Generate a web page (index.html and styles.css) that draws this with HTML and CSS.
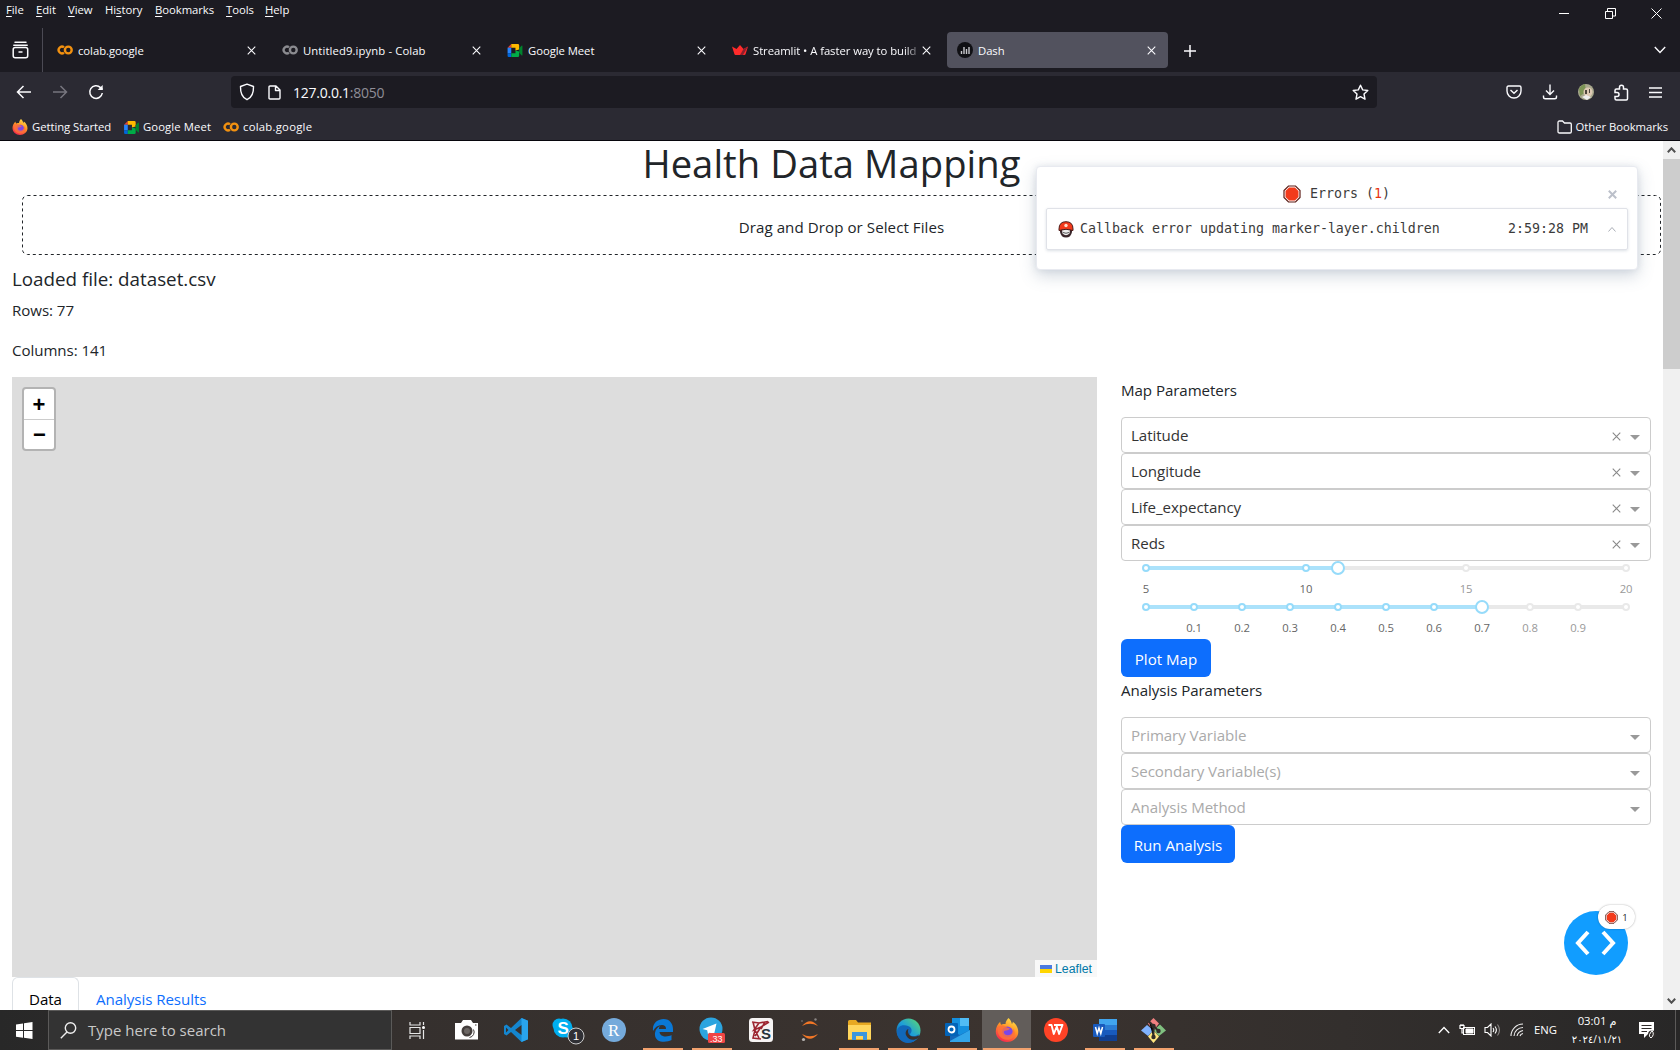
FILE: index.html
```html
<!DOCTYPE html>
<html lang="en">
<head>
<meta charset="utf-8">
<title>Dash</title>
<link rel="stylesheet" href="styles.css">
</head>
<body>
<svg class="defs" width="0" height="0">
  <defs>
    <linearGradient id="fx" x1=".8" y1="0" x2=".3" y2="1"><stop offset="0" stop-color="#ffe84a"/><stop offset=".45" stop-color="#ff9526"/><stop offset="1" stop-color="#f5264f"/></linearGradient>
    <linearGradient id="eg" x1="0" y1="1" x2="1" y2="0"><stop offset="0" stop-color="#0c59a4"/><stop offset=".5" stop-color="#1e9fd8"/><stop offset="1" stop-color="#5fdc6c"/></linearGradient>
    <symbol id="x" viewBox="0 0 10 10"><path d="M.8.8 9.2 9.2M9.2.8.8 9.2" fill="none" stroke="currentColor" stroke-width="1.2"/></symbol>
    <symbol id="colab" viewBox="0 0 16 10"><g fill="none" stroke-width="2.4"><circle cx="11.3" cy="5" r="3.4" stroke="currentColor"/><path d="M7 2.2A3.4 3.4 0 1 0 7 7.8" stroke="currentColor"/></g></symbol>
    <symbol id="meet" viewBox="0 0 16 14"><path d="M0 4 4 0v4z" fill="#ea4335"/><path d="M0 4h4v6H0z" fill="#2684fc"/><path d="M0 10h4v4H1.3Q0 14 0 12.700z" fill="#0066da"/><path d="M4 0h7q1.500 0 1.500 1.400V6L8.500 7V4H4z" fill="#ffba00"/><path d="M4 10h4.500V7l4 1v4.600q0 1.400-1.500 1.400H4z" fill="#00ac47"/><path d="M12.500 4.500 15 1.800q1-.6 1 .4v9.600q0 1-1 .4l-2.500-2.700z" fill="#00832d"/></symbol>
    <symbol id="firefox" viewBox="0 0 32 32"><path d="M18 0c3 3 4 5 4.500 8 1-1 1.200-2 1.200-3C28 8 31 13 31 18.500 31 26 24 32 16 32S1 26 1 18C1 12 4 8 7 5c0 2 .5 3 1.500 4C10 8 12 8 14 8c0-3 2-6 4-8z" fill="url(#fx)"/><circle cx="16.500" cy="18.500" r="7.200" fill="#7b46e8"/><path d="M4 12c4-3 8-2 11 0 2 1.500 4 1.500 5 2-2 3-5 2-7 3-3 2 0 6 4 6 5 0 8-4 7-9 5 6 2 14-6 15C8 30 2 22 4 12z" fill="#ff7139" opacity=".8"/></symbol>
    <symbol id="stop" viewBox="0 0 18 18"><path d="M5.500 1h7L17 5.500v7L12.500 17h-7L1 12.500v-7z" fill="#fff" stroke="#5c1d16" stroke-width="1.200"/><path d="M6.100 2.500h5.800l3.600 3.600v5.800l-3.600 3.600H6.100l-3.600-3.600V6.100z" fill="#f33a1b"/></symbol>
  </defs>
</svg>

<header class="browser">
  <div class="menubar">
    <nav class="menus">
      <span style="width:30px"><u>F</u>ile</span><span style="width:32px"><u>E</u>dit</span><span style="width:37px"><u>V</u>iew</span><span style="width:50px">Hi<u>s</u>tory</span><span style="width:71px"><u>B</u>ookmarks</span><span style="width:39px"><u>T</u>ools</span><span><u>H</u>elp</span>
    </nav>
    <div class="window-buttons">
      <svg width="11" height="11"><path d="M0 5.500h10" stroke="#fff"/></svg>
      <svg width="11" height="11"><path d="M.5 3.500h7v7h-7zM2.500 3V.5h8v7.500H8" fill="none" stroke="#fff"/></svg>
      <svg width="11" height="11"><path d="m.5.5 10 10m0-10-10 10" stroke="#fff"/></svg>
    </div>
  </div>

  <div class="tabstrip">
    <div class="recent"><svg width="17" height="18" fill="none" stroke="#fbfbfe" stroke-width="1.500"><path d="M3 1.200h11M1.800 4.200h13.400" stroke-linecap="round"/><rect x="1.200" y="6.500" width="14.500" height="10.300" rx="2"/><path d="M6.500 11h4"/></svg></div>
    <div class="tab"><svg class="fav colab" width="16" height="10"><use href="#colab"/></svg><span class="label">colab.google</span><svg class="close"><use href="#x"/></svg></div>
    <div class="tab"><svg class="fav colab grey" width="16" height="10"><use href="#colab"/></svg><span class="label wide">Untitled9.ipynb - Colab</span><svg class="close"><use href="#x"/></svg></div>
    <div class="tab"><svg class="fav" width="16" height="13"><use href="#meet"/></svg><span class="label">Google Meet</span><svg class="close"><use href="#x"/></svg></div>
    <div class="tab"><svg class="fav" width="16" height="10"><path d="M0 1.500 4.500 4 8 0l3.500 4L16 1.500 13.600 9q-.2 1-1.200 1H3.600q-1 0-1.200-1z" fill="#ff2b2b"/><path d="m11.500 4 4.500-2.500L11 10H8z" fill="#8d1f2c"/></svg><span class="label fade">Streamlit • A faster way to build</span><svg class="close"><use href="#x"/></svg></div>
    <div class="tab active"><svg class="fav" width="16" height="16"><circle cx="8" cy="8" r="8" fill="#101014"/><path d="M4.500 12V9M7 12V5M9.500 12V7M12 12V5" stroke="#c8c8cc" stroke-width="1.400"/></svg><span class="label">Dash</span><svg class="close"><use href="#x"/></svg></div>
    <svg class="newtab" width="12" height="12"><path d="M6 0v12M0 6h12" stroke="#fbfbfe" stroke-width="1.500"/></svg>
    <svg class="alltabs" width="12" height="8"><path d="m.8 1 5.200 5.400L11.200 1" fill="none" stroke="#fbfbfe" stroke-width="1.400"/></svg>
  </div>

  <div class="toolbar">
    <div class="nav-buttons">
      <svg width="16" height="14" fill="none" stroke="#fbfbfe" stroke-width="1.500"><path d="M7.500 1 1.500 7l6 6M1.500 7H15"/></svg>
      <svg width="16" height="14" fill="none" stroke="#77767f" stroke-width="1.500"><path d="m8.500 1 6 6-6 6M14.500 7H1"/></svg>
      <svg width="16" height="16" fill="none" stroke="#fbfbfe" stroke-width="1.500"><path d="M14.300 9A6.300 6.300 0 1 1 12.500 3.600L14.500 5.500"/><path d="M14.700 1v5H9.700z" fill="#fbfbfe" stroke="none"/></svg>
    </div>
    <div class="urlbar">
      <svg width="16" height="18" fill="none" stroke="#fbfbfe" stroke-width="1.400"><path d="M8 1.200 14.500 3.500c.2 6-1.500 11-6.500 13.200C3 14.500 1.300 9.500 1.500 3.500z" stroke-linejoin="round"/></svg>
      <svg width="13" height="15" fill="none" stroke="#fbfbfe" stroke-width="1.400"><path d="M1 2q0-1 1-1h6l4 4v8q0 1-1 1H2q-1 0-1-1zM7.500 1v4.500H12" stroke-linejoin="round"/></svg>
      <span class="url">127.0.0.1<span class="port">:8050</span></span>
      <svg class="star" width="17" height="17" fill="none" stroke="#fbfbfe" stroke-width="1.400"><path d="m8.500 1.200 2.200 4.700 5.100.6-3.800 3.500 1 5.200-4.500-2.600L4 15.200 5 10 1.200 6.500l5.100-.6z" stroke-linejoin="round"/></svg>
    </div>
    <div class="actions">
      <svg width="16" height="14" fill="none" stroke="#fbfbfe" stroke-width="1.400"><path d="M2.500 1h11q1.500 0 1.500 1.500V6a7 7 0 0 1-14 0V2.500Q1 1 2.500 1z"/><path d="M4.500 5 8 8.300 11.500 5"/></svg>
      <svg width="16" height="16" fill="none" stroke="#fbfbfe" stroke-width="1.400"><path d="M8 .5V10M4 6.500l4 4 4-4M1.500 11.500V13q0 1.800 1.800 1.800h9.400q1.800 0 1.800-1.800v-1.500"/></svg>
      <svg width="16" height="16"><circle cx="8" cy="8" r="8" fill="#a9a98e"/><path d="M1 5Q3 1 7 0l1 8-6 4z" fill="#7c9455"/><circle cx="10" cy="8" r="4.500" fill="#ddc9b4"/><path d="M7 6h2v4H7zM11 5h1v4h-1z" fill="#4d463d"/><path d="m4 13 4-2 5 2-4 3z" fill="#eee"/></svg>
      <svg width="15" height="17" fill="none" stroke="#fbfbfe" stroke-width="1.500"><path d="M1 6.500q0-1.500 1.500-1.500h3V3.200a2 2 0 0 1 4 0V5H12q1.500 0 1.500 1.500v8.300q0 1.200-1.200 1.200H2.500Q1 16 1 14.500v-2h2a2 2 0 0 0 0-4H1z"/></svg>
      <svg width="13" height="11"><path d="M0 1h13M0 5.500h13M0 10h13" stroke="#fbfbfe" stroke-width="1.400"/></svg>
    </div>
  </div>

  <div class="bookmarks">
    <svg width="16" height="16"><use href="#firefox"/></svg><span style="width:92px">Getting Started</span>
    <svg width="15" height="13"><use href="#meet"/></svg><span class="wide" style="width:80px">Google Meet</span>
    <svg class="colab" width="16" height="10"><use href="#colab"/></svg><span class="wider">colab.google</span>
    <div class="other"><svg width="15" height="14" fill="none" stroke="#fbfbfe" stroke-width="1.300"><path d="M1 2.500Q1 1 2.500 1h3l2 2H13q1.300 0 1.300 1.300V11.700Q14.300 13 13 13H2.500Q1 13 1 11.500z"/></svg><span>Other Bookmarks</span></div>
  </div>
</header>

<main class="viewport">
  <div class="page">
    <h1>Health Data Mapping</h1>
    <div class="upload"><svg class="outline" width="1639" height="60"><rect x=".5" y=".5" width="1638" height="59" rx="5" fill="none" stroke="#212529" stroke-dasharray="3 3"/></svg><span>Drag and Drop or Select Files</span></div>
    <h5>Loaded file: dataset.csv</h5>
    <p>Rows: 77</p>
    <p>Columns: 141</p>
    <div class="row">
      <div class="map">
        <div class="zoom"><span>+</span><span>−</span></div>
        <div class="attribution"><svg width="12" height="8"><path d="M0 0h12v4H0z" fill="#4c7be1"/><path d="M0 4h12v4H0z" fill="#ffd500"/></svg>Leaflet</div>
      </div>
      <section class="params">
        <p>Map Parameters</p>
        <div class="select"><span>Latitude</span><svg class="clear"><use href="#x"/></svg><i></i></div>
        <div class="select"><span>Longitude</span><svg class="clear"><use href="#x"/></svg><i></i></div>
        <div class="select"><span>Life_expectancy</span><svg class="clear"><use href="#x"/></svg><i></i></div>
        <div class="select"><span>Reds</span><svg class="clear"><use href="#x"/></svg><i></i></div>
        <div class="slider">
          <div class="track" style="width:40%"></div>
          <b class="on" style="left:0%"></b><b class="on" style="left:33.33%"></b><b style="left:66.67%"></b><b style="left:100%"></b>
          <div class="handle" style="left:40%"></div>
          <em class="on" style="left:0%">5</em><em class="on" style="left:33.33%">10</em><em style="left:66.67%">15</em><em style="left:100%">20</em>
        </div>
        <div class="slider">
          <div class="track" style="width:70%"></div>
          <b class="on" style="left:0%"></b><b class="on" style="left:10%"></b><b class="on" style="left:20%"></b><b class="on" style="left:30%"></b><b class="on" style="left:40%"></b><b class="on" style="left:50%"></b><b class="on" style="left:60%"></b><b style="left:80%"></b><b style="left:90%"></b><b style="left:100%"></b>
          <div class="handle" style="left:70%"></div>
          <em class="on" style="left:10%">0.1</em><em class="on" style="left:20%">0.2</em><em class="on" style="left:30%">0.3</em><em class="on" style="left:40%">0.4</em><em class="on" style="left:50%">0.5</em><em class="on" style="left:60%">0.6</em><em class="on" style="left:70%">0.7</em><em style="left:80%">0.8</em><em style="left:90%">0.9</em>
        </div>
        <button class="btn plot">Plot Map</button>
        <p>Analysis Parameters</p>
        <div class="select empty"><span>Primary Variable</span><i></i></div>
        <div class="select empty"><span>Secondary Variable(s)</span><i></i></div>
        <div class="select empty"><span>Analysis Method</span><i></i></div>
        <button class="btn run">Run Analysis</button>
      </section>
    </div>
    <div class="result-tabs"><span class="current">Data</span><span>Analysis Results</span></div>
  </div>
  <div class="scrollbar">
    <svg width="9" height="6"><path d="M.8 5.200 4.500 1.300 8.200 5.200" fill="none" stroke="#505050" stroke-width="2"/></svg>
    <div class="thumb"></div>
    <svg class="down" width="9" height="6"><path d="M.8.8 4.500 4.700 8.200.8" fill="none" stroke="#505050" stroke-width="2"/></svg>
  </div>

  <aside class="errors">
    <div class="errors-head"><svg width="18" height="18"><use href="#stop"/></svg><span>Errors (<strong>1</strong>)</span><svg class="dismiss" width="9" height="9"><path d="m.8.8 7.400 7.400m0-7.400L.8 8.200" stroke="#bcc0ca" stroke-width="2"/></svg></div>
    <div class="error-item">
      <svg width="16" height="17"><path d="M2 7h12v4q-1 5.500-6 5.500T2 11z" fill="#39262a"/><path d="M4 9q4-1.500 8 0l-.5 3.500Q8 16 4.500 12.500z" fill="#eee"/><path d="M5 11.500q3 1.500 6 0" stroke="#555" fill="none"/><path d="M1 8Q1 .7 8 .7T15 8v1.500Q8 7 1 9.500z" fill="#f33a1b" stroke="#4b1b19"/><circle cx="8" cy="4.500" r="1.700" fill="#ffddc9"/></svg>
      <span class="message">Callback error updating marker-layer.children</span><span class="time">2:59:28 PM</span>
      <svg width="8" height="5"><path d="m.5 4.500 3.500-4 3.500 4" fill="none" stroke="#a9adb5"/></svg>
    </div>
  </aside>

  <div class="debug"><svg width="42" height="26" fill="none" stroke="#fff" stroke-width="4"><path d="m13 2-10 11 10 11M28 2l10 11-10 11"/></svg>
    <div class="debug-badge"><svg width="13" height="13"><use href="#stop"/></svg>1</div>
  </div>
</main>

<footer class="taskbar">
  <div class="start"><svg width="17" height="17" fill="#fff"><path d="M0 2.400 7 1.400v6.700H0zM8 1.300 16.500 0v8.100H8zM0 9h7v6.700l-7-1zM8 9h8.500v8L8 15.800z"/></svg></div>
  <div class="search"><svg width="17" height="17" fill="none" stroke="#eee" stroke-width="1.400"><circle cx="10.500" cy="6" r="5.200"/><path d="M7 10 .8 16.200"/></svg><span>Type here to search</span></div>
  <div class="apps">
    <div class="app first"><svg width="17" height="17" fill="none" stroke="#e6e6e6" stroke-width="1.200"><path d="M1 0v3h10V0M1 5.500h10v6H1zM1 17v-3h10v3M14.500 0v3M14.500 8v9"/><circle cx="14.500" cy="5.500" r="1.500" fill="#fff" stroke="none"/></svg></div>
    <div class="app"><svg width="25" height="20"><path d="M1 3h6l2-3h8l2 3h5v16.500H1z" fill="#fff"/><circle cx="13" cy="11" r="5.500" fill="#443e3c"/><path d="M14 16.500a5.500 5.500 0 0 0 4-8" stroke="#443e3c" stroke-width="1" fill="none" transform="translate(1.500 1)"/><circle cx="13" cy="11" r="3" fill="#6b6663"/><path d="M21 5h1.500" stroke="#443e3c"/></svg></div>
    <div class="app"><svg width="24" height="24"><path d="M17.500 0 24 2.800v18.400L17.500 24 7 14l-4.500 3.500L0 16V8l2.500-1.500L7 10z" fill="#1486cf"/><path d="M17.500 0 24 2.800v18.400L17.500 24z" fill="#29a4ee"/><path d="M17.500 7v10L11 12zM2 9.500 4.500 12 2 14.500z" fill="#38302d"/></svg></div>
    <div class="app skype"><svg width="34" height="30"><circle cx="8" cy="10" r="6.500" fill="#00aff0"/><circle cx="16" cy="16" r="6.500" fill="#00aff0"/><circle cx="12" cy="13" r="9.500" fill="#00aff0"/><text x="6.500" y="19" class="glyph" font-size="17">S</text><circle cx="25" cy="21" r="8" fill="#303035" stroke="#ccc"/><text x="22" y="25" class="glyph light" font-size="11">1</text></svg></div>
    <div class="app"><svg width="24" height="24"><circle cx="12" cy="12" r="12" fill="#75aadb"/><text x="6" y="18" class="serif" font-size="17">R</text></svg></div>
    <div class="app open"><svg width="22" height="23"><path d="M1 12C0 4 6 0 11.500 0 18 0 21 5 21 10v3H7.500c.5 5 7.500 5.500 12 3v5C14 24 2 24 3 14c.5-4 3-6 5-7-1 1.500-1 2-1 3h7c0-3-1.500-4-4-4C6 6 3 8 1 12z" fill="#0a78d6"/></svg></div>
    <div class="app open"><svg width="27" height="27"><circle cx="12" cy="12" r="11.500" fill="#2ca4df"/><path d="m3.500 12 14-5.500-2.700 12-4-3-1.800 2-.8-4.200z" fill="#fff"/><rect x="9" y="16" width="17" height="10" rx="1.500" fill="#f04545"/><text x="11" y="24.500" class="small">.33</text></svg></div>
    <div class="app"><svg width="24" height="24"><rect width="24" height="24" rx="3.500" fill="#f6f3f3"/><path d="m3 4 7 1 9-1.500M4 4l2 8-2 8 8 1M10 5 5 12l7-3 8-5M12 9l-6 9M6 12l4 8M16 4l-4 7" stroke="#9d2530" stroke-width="1.600" fill="none"/><text x="12" y="21" class="spy">S</text></svg></div>
    <div class="app"><svg width="20" height="24" fill="none"><path d="M2 8Q10-1.500 18 8 10 3.500 2 8zM2 16q8 9.500 16 0-8 4.500-16 0z" fill="#f37726"/><circle cx="15.500" cy="1.500" r="1.200" fill="#8a8583"/><circle cx="3.500" cy="21.500" r="1.600" fill="#b5b2b0"/><circle cx="2" cy="3" r=".8" fill="#8a8583"/></svg></div>
    <div class="app open"><svg width="23" height="21"><path d="M0 1.500Q0 0 1.500 0H8l2 2.500h13V20H0z" fill="#e7a922"/><path d="M0 5h23v14H0z" fill="#ffd75e"/><path d="M4 12h15v8h-4v-4H8v4H4z" fill="#3a96dd"/></svg></div>
    <div class="app open"><svg width="25" height="25"><circle cx="12.500" cy="12.500" r="12" fill="url(#eg)"/><path d="M1 16C0 7 8 6 12 8c5 2 4 6 2 8-1 2 4 4 9 0-2 6-6 9-11 9C5 24.500 2 20 1 16z" fill="#1168ba"/><path d="M13.500 17c-2-2-1.500-5-1-6-2 0-4 4-2 7 2 4 7 5 12 2l1-3c-3 2-8 2-10 0z" fill="#38302d"/></svg></div>
    <div class="app open"><svg width="25" height="24"><path d="M7 0h17v17H7z" fill="#1490df"/><path d="M15 0h9v8h-9z" fill="#50bcf5"/><path d="M5 12l10 5 10-5v12H5z" fill="#1266b8"/><path d="m5 23 20-11v12H5z" fill="#32a5e8"/><rect y="5" width="13" height="13" rx="1" fill="#0364b8"/><circle cx="6.500" cy="11.500" r="3" fill="none" stroke="#fff" stroke-width="1.800"/></svg></div>
    <div class="app open focus"><svg width="24" height="24"><use href="#firefox"/></svg></div>
    <div class="app"><svg width="24" height="24"><circle cx="12" cy="12" r="12" fill="#ff4326"/><path d="M4.500 7h3l2.300 9 3-7.500 2.300 7.500L18.500 7H10" fill="none" stroke="#fff" stroke-width="1.900" stroke-linejoin="round"/></svg></div>
    <div class="app open"><svg width="24" height="22"><path d="M6 0h18v6H6z" fill="#41a5ee"/><path d="M6 6h18v5H6z" fill="#2b7cd3"/><path d="M6 11h18v5H6z" fill="#185abd"/><path d="M6 16h18v6H6z" fill="#103f91"/><rect y="5" width="12" height="13" rx="1" fill="#185abd"/><path d="m2.500 8 1.700 6.500L6 9l1.800 5.500L9.500 8" fill="none" stroke="#fff" stroke-width="1.500"/></svg></div>
    <div class="app open"><svg width="25" height="25"><path d="M12.500 0 18 5.500l-5.500 7L7 5.500z" fill="#f08080"/><path d="M0 12.500 6 7l6.500 5.500L7 18z" fill="#80b3ff"/><path d="m25 12.500-6-6-6.500 6L18 18z" fill="#80c080"/><path d="m12.500 25 5.500-6.500-5.500-6L7 18.500z" fill="#ffe680"/><path d="M8 3.500 12.500 8v12M12.500 8l5 5" stroke="#302b29" stroke-width="2"/><g fill="#302b29"><circle cx="12.500" cy="8" r="2.200"/><circle cx="17.500" cy="13" r="2.200"/><circle cx="12.500" cy="19" r="2.200"/></g></svg></div>
  </div>
  <div class="tray">
    <svg width="12" height="8"><path d="m.8 7 5.200-5.500L11.200 7" fill="none" stroke="#fff" stroke-width="1.300"/></svg>
    <svg width="16" height="12" fill="none" stroke="#fff"><rect x="4.500" y="3.500" width="11" height="7"/><path d="M7 5h7v4H7z" fill="#fff"/><path d="M1 1.500h4v3H1zM2 0v2M4 0v2M3 5v4h1" stroke-width="1.200"/></svg>
    <svg width="17" height="14" fill="none" stroke="#fff" stroke-width="1.100"><path d="M1 4.500h2.500L7 1v12L3.500 9.500H1zM9 5q1.500 2 0 4M11 3.500q2.800 3.500 0 7"/><path d="M13.500 1.500q4 5.500 0 11" stroke="#8d8987"/></svg>
    <svg width="14" height="14" fill="none" stroke="#eee" stroke-width="1.100"><path d="M1 13A12 12 0 0 1 13 1M4 13A9 9 0 0 1 13 4.500M7 13q1-4.500 6-5.500M10 13q.5-2 3-2.500"/></svg>
    <span class="lang">ENG</span>
    <div class="clock"><span>03:01 م</span><span class="date">٢٠٢٤/١١/٢١</span></div>
    <svg class="note" width="17" height="17"><path d="M0 0h15v12H9l-4 4v-4H0z" fill="#fff"/><path d="M2.500 3.500h10M2.500 6.500h10M2.500 9.500H8" stroke="#302c2b" stroke-width="1.200"/><circle cx="13" cy="12.500" r="4" fill="#302c2b"/><path d="M13 8.500q3 4-1 7.500-2-1-1.500-3.500z" fill="none" stroke="#fff"/></svg>
    <div class="peek"></div>
  </div>
</footer>
</body>
</html>
```
FILE: styles.css
```css
* { box-sizing: border-box; }
body { margin: 0; width: 1680px; height: 1050px; overflow: hidden; display: flex; flex-direction: column; background: #fff; color: #212529; font: 15.1px/24px "Open Sans", "Noto Sans", sans-serif; }
svg { flex: none; display: block; }
.defs { position: absolute; }

/* Browser window */
.browser { height: 141px; flex: none; background: #2b2a33; border-bottom: 1px solid #07060c; color: #fbfbfe; font-size: 11.3px; letter-spacing: -.05px; line-height: 16px; white-space: nowrap; }
.menubar { height: 28px; display: flex; justify-content: space-between; background: #1c1b22; }
.menus { display: flex; padding: 2px 0 0 6px; }
.menus u { text-underline-offset: 2px; }
.window-buttons { display: flex; gap: 35px; padding: 8px 18px 0 0; }
.tabstrip { height: 44px; display: flex; align-items: center; background: #1c1b22; }
.recent { width: 43px; height: 44px; padding: 13px 0 0 12px; border-right: 1px solid #4b4a54; margin-right: 4px; }
.tab { width: 221px; height: 36px; margin-right: 4px; padding: 0 12px 0 10px; display: flex; align-items: center; border-radius: 4px; }
.tab.active { background: #52525e; }
.fav { margin-right: 5px; }
.label { flex: 1; overflow: hidden; padding-top: 2px; height: 18px; }
.label.wide, .bookmarks .wide { letter-spacing: .1px; }
.bookmarks .wider { letter-spacing: .25px; }
.fade { mask-image: linear-gradient(90deg, #000 90%, transparent); }
.close { width: 9px; height: 9px; margin-left: 0; }
.colab { color: #f29110; }
.colab.grey { color: #8b8b90; }
.newtab { margin: 1px 0 0 12px; }
.alltabs { margin-left: auto; margin-right: 14px; }
.toolbar { height: 40px; display: flex; align-items: center; }
.nav-buttons { width: 231px; display: flex; gap: 20px; align-items: center; padding-left: 16px; }
.urlbar { width: 1146px; height: 32px; border-radius: 4px; background: #1c1b22; display: flex; align-items: center; padding: 0 8px; }
.urlbar svg + svg { margin-left: 13px; }
.url { margin-left: 12px; padding-top: 1px; font-size: 14px; letter-spacing: -.25px; }
.port { color: #8f8e97; }
.star { margin-left: auto; }
.actions { margin-left: auto; display: flex; align-items: center; gap: 20px; padding-right: 18px; }
.bookmarks { height: 28px; display: flex; align-items: center; padding: 2px 12px 0; }
.bookmarks span { margin-left: 4px; }
.other { margin-left: auto; display: flex; align-items: center; }

/* Page area */
.viewport { height: 869px; flex: none; display: flex; position: relative; overflow: hidden; }
.page { width: 1663px; flex: none; padding: 0 12px; }
h1 { margin: 0 0 6px; height: 48px; text-align: center; font-weight: 400; font-size: 38.2px; line-height: 45px; letter-spacing: .05px; }
.upload { width: 1639px; height: 60px; margin: 0 0 10px 10px; padding-top: 4px; position: relative; text-align: center; line-height: 57px; letter-spacing: .07px; }
.outline { position: absolute; left: 0; top: 0; }
h5 { margin: 0 0 8px; height: 24px; font-weight: 400; font-size: 18.8px; line-height: 28px; }
p { margin: 0 0 16px; height: 24px; line-height: 26px; letter-spacing: -.06px; }
.row { display: flex; gap: 24px; }
.map { width: 1085px; height: 600px; background: #ddd; position: relative; }
.zoom { position: absolute; left: 10px; top: 10px; width: 34px; height: 64px; border: 2px solid #b3b3b3; border-radius: 4px; background: #fff; color: #000; }
.zoom span { display: block; height: 30px; text-align: center; font: bold 22px/31px "Liberation Sans", sans-serif; }
.zoom span + span { border-top: 1px solid #ccc; line-height: 29px; padding-left: 1px; }
.attribution { position: absolute; right: 0; bottom: 0; width: 62px; height: 17px; padding-left: 5px; display: flex; align-items: center; gap: 3px; background: #f8f8f8; color: #0078a8; font: 12.3px/18px "Liberation Sans", sans-serif; }
.params { width: 530px; }
.select { height: 36px; display: flex; align-items: center; padding: 0 10px 0 9px; border: 1px solid #ccc; border-radius: 4px; color: #333; letter-spacing: -.06px; }
.select span { flex: 1; }
.select.empty span { color: #aaa; }
.clear { width: 9px; height: 9px; margin: 3px 9px 0 0; color: #888; }
.select i { border: 5px solid transparent; border-top-color: #999; border-bottom: 0; margin-top: 4px; }
.slider { position: relative; width: 480px; height: 39px; margin-left: 25px; }
.slider::before { content: ""; display: block; height: 39px; background: linear-gradient(#e9e9e9, #e9e9e9) 0 5px / 100% 4px no-repeat; }
.track, .slider b, .slider em, .handle { position: absolute; }
.track { left: 0; top: 5px; height: 4px; background: #abe2fb; }
.slider b { top: 3px; width: 8px; height: 8px; margin-left: -4px; border: 2px solid #e9e9e9; border-radius: 50%; background: #fff; }
.slider b.on { border-color: #96dbfa; }
.handle { top: 0; width: 14px; height: 14px; margin-left: -7px; border: 2px solid #96dbfa; border-radius: 50%; background: #fff; }
.slider em { top: 19px; width: 30px; margin-left: -15px; text-align: center; font-style: normal; font-size: 11.3px; line-height: 18px; letter-spacing: -.1px; color: #999; }
.slider em.on { color: #666; }
.btn { display: block; height: 38px; padding: 2px 0 0; border: 0; border-radius: 6px; background: #0d6efd; color: #fff; font: inherit; }
.plot { width: 90px; }
.run { width: 114px; }
.result-tabs { display: flex; color: #0d6efd; letter-spacing: -.06px; }
.result-tabs span { padding: 10px 17px; }
.result-tabs .current { width: 67px; padding: 9px 0 0 16px; color: #000; border: 1px solid #dee2e6; border-bottom: 0; border-radius: 6px 6px 0 0; }
.scrollbar { width: 17px; background: #f0f0f0; display: flex; flex-direction: column; align-items: center; padding: 6px 0; }
.thumb { width: 17px; height: 210px; margin-top: 6px; background: #cdcdcd; }
.down { margin-top: auto; }

/* Dash developer tools, floating over the page */
.errors { position: absolute; left: 1036px; top: 25px; width: 602px; height: 104px; padding: 15px 9px 0; background: #fff; border-radius: 4px; border: 1px solid #e8eaf0; box-shadow: 0 6px 16px rgba(80,103,132,.25), 0 0 6px rgba(80,103,132,.12); color: #3b3b3b; font: 13.29px/20px "DejaVu Sans Mono", monospace; white-space: nowrap; }
.errors-head { height: 26px; display: flex; align-items: center; padding: 0 11px 2px 237px; }
.errors-head span { margin-left: 9px; }
.errors strong { font-weight: 400; color: #e8350f; }
.dismiss { margin-left: auto; }
.error-item { height: 42px; display: flex; align-items: center; padding: 0 11px; border: 1px solid #e0e2e8; border-radius: 2px; box-shadow: 0 1px 3px rgba(80,103,132,.2); }
.message { margin-left: 6px; }
.time { margin: 0 20px 0 auto; }
.debug { position: absolute; left: 1564px; top: 770px; width: 64px; height: 64px; border-radius: 50%; background: #119dff; display: flex; align-items: center; justify-content: center; }
.debug-badge { position: absolute; left: 34px; top: -6px; width: 37px; height: 24px; border-radius: 12px; background: #fff; box-shadow: 0 0 2px rgba(0,0,0,.35); display: flex; align-items: center; justify-content: center; gap: 4px; padding-top: 1px; font-size: 9.5px; }

/* Windows taskbar */
.taskbar { height: 40px; flex: none; display: flex; background: linear-gradient(90deg, #282828 0, #35302e 24%, #3b332f 60%, #332f2d 80%, #282727); color: #fff; }
.start { width: 48px; padding: 12px 0 0 16px; }
.search { width: 344px; display: flex; align-items: center; padding-left: 11px; gap: 11px; background: #333; border: 1px solid #5b5a59; color: #c9c9c9; font-size: 15px; }
.apps { display: flex; }
.app { width: 49.1px; height: 40px; display: flex; align-items: center; justify-content: center; }
.app.first { width: 50px; }
.skype { padding-left: 7px; }
.app.open { background: linear-gradient(#f2a26e, #f2a26e) 50% 100% / 40px 2px no-repeat; }
.app.focus { background: linear-gradient(#f2a26e, #f2a26e) 50% 100% / 48px 2px no-repeat, #625d5a; }
.glyph { fill: #fff; font-family: "Liberation Sans", sans-serif; font-weight: bold; }
.glyph.light { font-weight: 400; }
.serif { fill: #fff; font-family: "Liberation Serif", serif; }
.small { fill: #fff; font: 9px "Liberation Sans", sans-serif; }
.spy { fill: #26333a; font: bold 15px "Liberation Sans", sans-serif; }
.tray { margin-left: auto; display: flex; align-items: center; white-space: nowrap; font-size: 11.3px; }
.tray > svg { margin-right: 9px; }
.tray .lang { width: 28px; margin-left: 1px; }
.clock { width: 70px; display: flex; flex-direction: column; align-items: center; line-height: 18px; letter-spacing: -.2px; font-family: "Open Sans", "DejaVu Sans", sans-serif; }
.date { font-size: 10px; }
.tray .note { margin: 0 19px 0 7px; }
.peek { width: 5px; height: 40px; border-left: 1px solid #5c5a59; }
```
